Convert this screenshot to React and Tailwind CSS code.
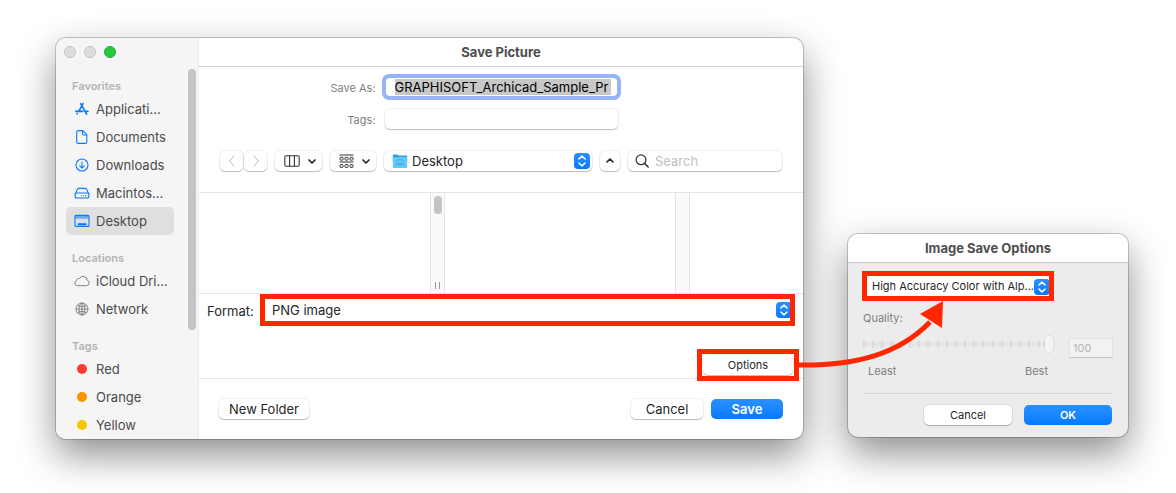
import React, { useState } from 'react';
import clsx from 'clsx';

const favorites = [
  { name: 'Applicati...', icon: AppsIcon },
  { name: 'Documents', icon: DocumentIcon },
  { name: 'Downloads', icon: DownloadIcon },
  { name: 'Macintos...', icon: DriveIcon },
  { name: 'Desktop', icon: DesktopIcon },
];

const locations = [
  { name: 'iCloud Dri...', icon: CloudIcon },
  { name: 'Network', icon: GlobeIcon },
];

const tags = [
  { name: 'Red', color: 'bg-[#ff3b30]' },
  { name: 'Orange', color: 'bg-[#f79400]' },
  { name: 'Yellow', color: 'bg-[#f7c600]' },
];

const plain = 'rounded-[5px] bg-white text-[#262626] shadow-[0_0_0_1px_rgba(0,0,0,0.06),0_1px_1px_rgba(0,0,0,0.22)]';
const primary = 'rounded-[5px] bg-linear-to-b from-[#2b90ff] to-[#007aff] font-semibold text-white';
const windowShadow = 'rounded-[10px] shadow-[0_0_0_1px_rgba(0,0,0,0.2),0_16px_38px_rgba(0,0,0,0.45)]';

/* ---------- icons ---------- */

function AppsIcon() {
  return (
    <svg viewBox="0 0 16 16" className="size-4" fill="none" stroke="#0a7aff" strokeWidth="1.6" strokeLinecap="round">
      <path d="M9.1 2.6 5 9.9M6.7 2.6l5.9 10.6M1.8 10.4h7M11.6 10.4h2.4M3.1 12.9l.2-.4" />
    </svg>
  );
}

function DocumentIcon() {
  return (
    <svg viewBox="0 0 16 16" className="size-4" fill="none" stroke="#0a7aff" strokeWidth="1.1" strokeLinejoin="round">
      <path d="M4.2 1.6h4.6l4 4.2v7.1c0 1-.5 1.5-1.5 1.5H4.2c-1 0-1.5-.5-1.5-1.5V3.1c0-1 .5-1.5 1.5-1.5Z" />
      <path d="M8.6 1.8v3.1c0 .7.4 1.1 1.1 1.1h3" />
    </svg>
  );
}

function DownloadIcon() {
  return (
    <svg viewBox="0 0 16 16" className="size-4" fill="none" stroke="#0a7aff" strokeWidth="1.1" strokeLinecap="round" strokeLinejoin="round">
      <circle cx="8" cy="8" r="6" />
      <path d="M8 4.9v6M5.7 8.8 8 11.1l2.3-2.3" />
    </svg>
  );
}

function DriveIcon() {
  return (
    <svg viewBox="0 0 16 16" className="size-4" fill="none" stroke="#0a7aff" strokeWidth="1.1" strokeLinejoin="round">
      <path d="M1 9.5 3.4 4.3c.3-.6.8-.9 1.5-.9h6.2c.7 0 1.2.3 1.5.9L15 9.5" />
      <rect x="1" y="8" width="14" height="5" rx="2" />
      <path d="M7 10.6h1M9 10.6h1M11 10.6h1.6" strokeWidth="1.3" opacity="0.7" />
    </svg>
  );
}

function DesktopIcon() {
  return (
    <svg viewBox="0 0 16 16" className="size-4" fill="none" stroke="#0a7aff" strokeWidth="1.1">
      <rect x="1" y="2.4" width="14" height="11" rx="1" />
      <path d="M1.5 3.8h13" strokeWidth="1.6" opacity="0.55" />
      <path d="M1 5h14" strokeWidth="0.7" />
      <path d="M3.8 11.2h8.6" strokeWidth="1.9" />
    </svg>
  );
}

function CloudIcon() {
  return (
    <svg viewBox="0 0 16 16" className="size-4 overflow-visible" fill="none" stroke="#808080" strokeWidth="1" strokeLinejoin="round">
      <path d="M3.3 12.7h9.2a2.8 2.8 0 0 0 .7-5.5A4.2 4.2 0 0 0 5.4 5.5a2.2 2.2 0 0 0-2.9 2.2 2.6 2.6 0 0 0 .8 5Z" />
    </svg>
  );
}

function GlobeIcon() {
  return (
    <svg viewBox="0 0 16 16" className="size-4" fill="none" stroke="#7a7a7a" strokeWidth="0.9">
      <circle cx="8" cy="8" r="6" />
      <ellipse cx="8" cy="8" rx="2.9" ry="6" />
      <path d="M8 2v12M2 8h12M3.3 4.5c2.8 1.3 6.6 1.3 9.4 0M3.3 11.5c2.8-1.3 6.6-1.3 9.4 0" />
    </svg>
  );
}

function FolderIcon() {
  return (
    <svg viewBox="0 0 16 16" className="size-4">
      <path d="M.8 2.2c0-.5.3-.8.8-.8h4l1.4 1.2h7.4c.5 0 .8.3.8.8V8H.8V2.2Z" fill="#2fa3dd" />
      <rect x="0.8" y="4.2" width="14.4" height="10.4" rx="0.8" fill="#66cbf8" />
      <path d="M1 14.2h14" stroke="#3fb0e8" strokeWidth="0.8" />
      <rect x="4.7" y="6.8" width="6.6" height="4.8" rx="0.5" fill="none" stroke="#38a8e0" strokeWidth="0.8" />
      <path d="M6 10.2h4" stroke="#38a8e0" strokeWidth="0.8" />
    </svg>
  );
}

function ColumnsIcon() {
  return (
    <svg viewBox="0 0 16 12" className="h-3 w-4" fill="none" stroke="#333" strokeWidth="1.1">
      <rect x="0.8" y="0.8" width="14.4" height="10.4" rx="1.2" />
      <path d="M5.6 1v10M10.4 1v10" />
    </svg>
  );
}

function GroupIcon() {
  return (
    <svg viewBox="0 0 15 15" className="size-[15px]" fill="none" stroke="#333" strokeWidth="1">
      <path d="M.5 1h14M.5 8h14" />
      <rect x="1" y="3.3" width="3" height="2.8" rx="0.6" />
      <rect x="6" y="3.3" width="3" height="2.8" rx="0.6" />
      <rect x="11" y="3.3" width="3" height="2.8" rx="0.6" />
      <rect x="1" y="10.6" width="3" height="2.8" rx="0.6" />
      <rect x="6" y="10.6" width="3" height="2.8" rx="0.6" />
      <rect x="11" y="10.6" width="3" height="2.8" rx="0.6" />
    </svg>
  );
}

function SearchIcon() {
  return (
    <svg viewBox="0 0 14 14" className="size-3.5 shrink-0" fill="none" stroke="#333" strokeWidth="1.2" strokeLinecap="round">
      <circle cx="6" cy="5.8" r="4.9" />
      <path d="m9.6 9.4 3.6 3.6" strokeWidth="1.5" />
    </svg>
  );
}

function Chevron({ d, className }) {
  return (
    <svg viewBox="0 0 12 12" className={clsx('size-3', className)} fill="none" stroke="currentColor" strokeLinecap="round" strokeLinejoin="round">
      <path d={d} />
    </svg>
  );
}

function Stepper({ className }) {
  return (
    <span className={clsx('pointer-events-none absolute size-4 rounded bg-linear-to-b from-[#2b90ff] to-[#007aff]', className)}>
      <svg viewBox="0 0 16 16" className="size-4" fill="none" stroke="#fff" strokeWidth="1.5" strokeLinecap="round" strokeLinejoin="round">
        <path d="m4.9 6 3.1-2.9L11.1 6M4.9 10 8 12.9l3.1-2.9" />
      </svg>
    </span>
  );
}

/* ---------- sidebar ---------- */

function SidebarSection({ title, children }) {
  return (
    <section>
      <h2 className="flex h-5 items-end pl-4 text-[11px] leading-[18px] font-semibold text-[#b3b3b3]">{title}</h2>
      <ul>{children}</ul>
    </section>
  );
}

function SidebarRow({ name, active, children }) {
  return (
    <li className="pr-6 pl-2.5">
      <button className={clsx('flex h-7 w-full items-center gap-1.5 rounded-[5px] pl-2 text-left whitespace-nowrap text-[#4a4a4a]', active && 'bg-[#dfdfdf]')}>
        <span className="flex w-4 shrink-0 justify-center">{children}</span>
        {name}
      </button>
    </li>
  );
}

function Sidebar() {
  return (
    <aside className="relative w-[143px] shrink-0 overflow-hidden rounded-l-[10px] border-r border-[#ececec] bg-[#f5f5f5]">
      <div className="flex h-[37px] gap-2 pt-2 pl-2">
        <button aria-label="Close" className="size-3 rounded-full border border-[#c3c3c3] bg-[#dcdcdc]" />
        <button aria-label="Minimize" className="size-3 rounded-full border border-[#c3c3c3] bg-[#dcdcdc]" />
        <button aria-label="Zoom" className="size-3 rounded-full border border-[#1faa30] bg-[#28c840]" />
      </div>
      <nav className="flex flex-col gap-3">
        <SidebarSection title="Favorites">
          {favorites.map(({ name, icon: Icon }) => (
            <SidebarRow key={name} name={name} active={name === 'Desktop'}><Icon /></SidebarRow>
          ))}
        </SidebarSection>
        <SidebarSection title="Locations">
          {locations.map(({ name, icon: Icon }) => (
            <SidebarRow key={name} name={name}><Icon /></SidebarRow>
          ))}
        </SidebarSection>
        <SidebarSection title="Tags">
          {tags.map(({ name, color }) => (
            <SidebarRow key={name} name={name}><span className={clsx('size-2.5 rounded-full', color)} /></SidebarRow>
          ))}
        </SidebarSection>
      </nav>
      <div className="absolute top-[31px] right-0.5 h-[261px] w-2 rounded-full bg-[#c4c4c4]" />
    </aside>
  );
}

/* ---------- save window ---------- */

function Toolbar() {
  return (
    <div className="mt-[22px] flex h-5 gap-2 px-[21px]">
      <div className="flex gap-px">
        <button aria-label="Back" className={clsx('flex w-[23px] items-center justify-center', plain)}>
          <Chevron d="M8 1 3.5 6 8 11" className="text-[#b8b8b8]" />
        </button>
        <button aria-label="Forward" className={clsx('flex w-[23px] items-center justify-center', plain)}>
          <Chevron d="M4 1 8.5 6 4 11" className="text-[#b8b8b8]" />
        </button>
      </div>
      <button aria-label="View as columns" className={clsx('flex w-[47px] items-center justify-end gap-1.5 pr-1', plain)}>
        <ColumnsIcon />
        <Chevron d="M3 5l3 3 3-3" className="stroke-[1.7]" />
      </button>
      <button aria-label="Group by" className={clsx('flex w-[46px] items-center justify-end gap-1.5 pr-1', plain)}>
        <GroupIcon />
        <Chevron d="M3 5l3 3 3-3" className="stroke-[1.7]" />
      </button>
      <div className="relative flex-1">
        <select aria-label="Folder" className={clsx('block h-5 w-full appearance-none pl-7', plain)}>
          <option>Desktop</option>
        </select>
        <span className="pointer-events-none absolute top-0.5 left-2"><FolderIcon /></span>
        <Stepper className="top-0.5 right-0.5" />
      </div>
      <button aria-label="Collapse" className={clsx('flex w-5 items-center justify-center', plain)}>
        <Chevron d="M3 7l3-3 3 3" className="stroke-[1.7]" />
      </button>
      <label className={clsx('flex w-[154px] items-center gap-1.5 pl-[7px]', plain)}>
        <SearchIcon />
        <input type="search" aria-label="Search" placeholder="Search" className="h-5 w-full min-w-0 bg-transparent outline-none placeholder:text-[#bfbfbf]" />
      </label>
    </div>
  );
}

function FileColumns() {
  return (
    <div className="mt-[21px] flex h-[102px] border-y border-[#e5e5e5]">
      <div className="w-[231px]" />
      <div className="flex w-[15px] flex-col items-center justify-between border-x border-[#e5e5e5] bg-[#fafafa] pt-[3px] pb-1">
        <div className="h-[18px] w-2 rounded-full bg-[#c4c4c4]" />
        <div className="h-[7px] w-[5px] border-x border-[#9a9a9a]" />
      </div>
      <div className="w-[230px]" />
      <div className="w-[15px] border-x border-[#e5e5e5] bg-[#fafafa]" />
      <div className="flex-1" />
    </div>
  );
}

function SaveWindow() {
  const [fileName, setFileName] = useState('GRAPHISOFT_Archicad_Sample_Pr');

  return (
    <div className={clsx('flex min-w-0 flex-1 bg-white', windowShadow)}>
      <Sidebar />
      <main className="min-w-0 flex-1">
        <h1 className="flex h-[29px] items-center justify-center border-b border-[#d5d5d5] font-bold text-[#4d4d4d]">Save Picture</h1>

        <div className="mt-2.5 grid grid-cols-[1fr_233px_1fr] gap-x-[9px] gap-y-3">
          <label htmlFor="save-as" className="self-end text-right text-[11px] leading-[18px] text-[#808080]">Save As:</label>
          <input
            id="save-as"
            type="text"
            value={fileName}
            onChange={(e) => setFileName(e.target.value)}
            className="h-5 rounded-[4px] border border-[#98b4f8] bg-[#c8c8c8] bg-clip-content pr-1.5 pl-[9px] py-px text-black ring-3 ring-[#98b4f8] outline-none"
          />
          <label htmlFor="tags" className="col-start-1 self-end text-right text-[11px] leading-[18px] text-[#808080]">Tags:</label>
          <input id="tags" type="text" className={clsx('h-5 px-2 outline-none', plain)} />
        </div>

        <Toolbar />
        <FileColumns />

        <div className="flex items-end gap-2 px-2 pt-[5px]">
          <label htmlFor="format" className="w-[45px] whitespace-nowrap text-[#262626]">Format:</label>
          <div className="relative flex-1">
            <select id="format" className="block h-[22px] w-full appearance-none bg-white px-3 text-[#262626]">
              <option>PNG image</option>
            </select>
            <Stepper className="top-[3px] right-[3px]" />
            <div className="pointer-events-none absolute inset-x-0 -inset-y-[5px] border-5 border-[#ff2600]" />
          </div>
        </div>

        <div className="mt-[34px] flex justify-end border-b border-[#e5e5e5] pr-2.5 pb-[3px]">
          <button className={clsx('relative h-5 w-[90px] text-[11px]', plain)}>
            Options
            <span className="pointer-events-none absolute -inset-1.5 border-5 border-[#ff2600]" />
          </button>
        </div>

        <div className="flex gap-2 px-5 py-5">
          <button className={clsx('mr-auto h-5 w-[90px]', plain)}>New Folder</button>
          <button className={clsx('h-5 w-[72px]', plain)}>Cancel</button>
          <button className={clsx('h-5 w-[72px]', primary)}>Save</button>
        </div>
      </main>
    </div>
  );
}

/* ---------- options dialog ---------- */

function OptionsDialog() {
  return (
    <div className={clsx('relative mt-[196px] w-[280px] shrink-0 self-start bg-[#ececec]', windowShadow)}>
      <h2 className="flex h-[29px] items-center justify-center rounded-t-[10px] border-b border-[#c9c9c9] bg-white font-bold text-[#4d4d4d]">Image Save Options</h2>

      <div className="px-[15px] pt-[13px] pb-3 text-[11px]">
        <div className="relative w-[190px]">
          <select aria-label="Color depth" className="block h-5 w-full appearance-none bg-white pl-[9px] text-[#262626]">
            <option>High Accuracy Color with Alp...</option>
          </select>
          <Stepper className="top-[3px] right-[3px]" />
          <div className="pointer-events-none absolute -inset-x-px -inset-y-[5px] border-5 border-[#ff2600]" />
        </div>

        <label htmlFor="quality" className="mt-3.5 block leading-4 text-[#808080]">Quality:</label>
        <div className="mt-2.5 flex items-start gap-4">
          <div className="relative h-4 w-[190px]">
            <div className="absolute inset-x-0 top-1.5 h-1 rounded-full bg-[#e4e4e4]" />
            <div className="absolute inset-x-0 top-1 flex justify-between pr-1">
              {Array.from({ length: 21 }, (_, i) => (
                <span key={i} className="h-2 w-0.5 bg-[#dcdcdc]" />
              ))}
            </div>
            <input
              id="quality"
              type="range"
              defaultValue="100"
              disabled
              className="relative block h-4 w-full appearance-none bg-transparent [&::-webkit-slider-thumb]:h-4 [&::-webkit-slider-thumb]:w-2 [&::-webkit-slider-thumb]:appearance-none [&::-webkit-slider-thumb]:rounded-full [&::-webkit-slider-thumb]:bg-[#f5f5f5] [&::-webkit-slider-thumb]:shadow-[0_0_0_1px_rgba(0,0,0,0.06)]"
            />
          </div>
          <input
            type="text"
            aria-label="Quality value"
            defaultValue="100"
            disabled
            className="mt-0.5 h-5 w-11 border border-[#e0e0e0] border-b-[#c8c8c8] bg-[#f2f2f2] px-[3px] text-[#b5b5b5]"
          />
        </div>
        <div className="mt-[5px] flex w-[190px] justify-between px-[5px] leading-4 text-[#808080]">
          <span>Least</span>
          <span>Best</span>
        </div>

        <div className="mt-3.5 flex justify-end gap-3 border-t border-[#d2d2d2] pt-[11px] pr-px">
          <button className={clsx('h-5 w-[88px]', plain)}>Cancel</button>
          <button className={clsx('h-5 w-[88px]', primary)}>OK</button>
        </div>
      </div>

      {/* Arrow from the Options button to the color depth menu */}
      <svg viewBox="0 0 154 76" className="pointer-events-none absolute top-[62px] -left-[52px] h-[76px] w-[154px]">
        <path d="M2 69C60 70 103 58 134 26" fill="none" stroke="#ff2600" strokeWidth="5" />
        <path d="M147 5 124 18 146 32Z" fill="#ff2600" />
      </svg>
    </div>
  );
}

export default function App() {
  return (
    <div className="flex items-start gap-[45px] bg-white pt-[38px] pr-12 pb-[54px] pl-14 font-['Inter',sans-serif] text-[13px] leading-5">
      <SaveWindow />
      <OptionsDialog />
    </div>
  );
}
